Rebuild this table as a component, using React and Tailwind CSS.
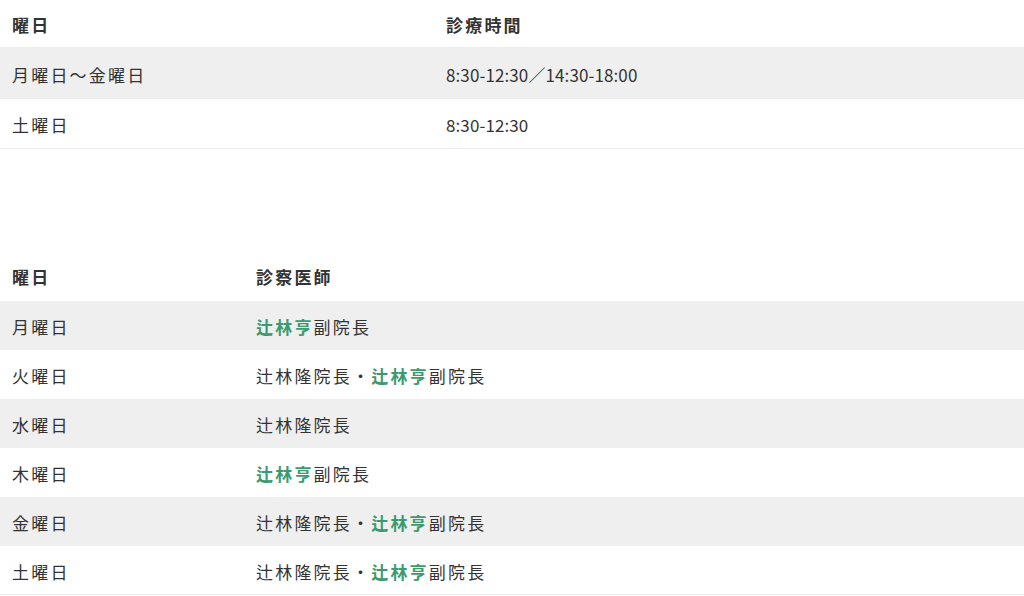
const hours = [
  { day: "月曜日〜金曜日", time: "8:30-12:30／14:30-18:00" },
  { day: "土曜日", time: "8:30-12:30" },
];

const G = ({ children }) => (
  <span className="font-bold text-[#3c9a6f]">{children}</span>
);

const doctors = [
  { day: "月曜日", doc: <><G>辻林亨</G>副院長</> },
  { day: "火曜日", doc: <>辻林隆院長・<G>辻林亨</G>副院長</> },
  { day: "水曜日", doc: <>辻林隆院長</> },
  { day: "木曜日", doc: <><G>辻林亨</G>副院長</> },
  { day: "金曜日", doc: <>辻林隆院長・<G>辻林亨</G>副院長</> },
  { day: "土曜日", doc: <>辻林隆院長・<G>辻林亨</G>副院長</> },
];

export default function App() {
  return (
    <div
      className="w-[1024px] h-[596px] overflow-hidden bg-white text-[#333] text-[17px] tracking-[2.2px]"
      style={{ fontFamily: '"Noto Sans CJK JP", "Noto Sans", sans-serif' }}
    >
      {/* 診療時間 */}
      <table className="w-full border-collapse">
        <thead>
          <tr className="h-[47px]">
            <th className="w-[434px] pl-3 pt-[3px] text-left font-bold">曜日</th>
            <th className="pl-3 pt-[3px] text-left font-bold">診療時間</th>
          </tr>
        </thead>
        <tbody>
          {hours.map((r, i) => (
            <tr
              key={i}
              className={
                (i % 2 === 0 ? "bg-[#efefef] h-[51px]" : "bg-white h-[50px]") +
                " border-b border-[#eeeeee]"
              }
            >
              <td className="pl-3 pt-1">{r.day}</td>
              <td className="pl-3 pt-1 tracking-[0.1px]">{r.time}</td>
            </tr>
          ))}
        </tbody>
      </table>

      {/* 診察医師 */}
      <table className="mt-[101px] w-full border-collapse">
        <thead>
          <tr className="h-[51px]">
            <th className="w-[244px] pl-3 pt-1 text-left font-bold">曜日</th>
            <th className="pl-3 pt-1 text-left font-bold">診察医師</th>
          </tr>
        </thead>
        <tbody>
          {doctors.map((r, i) => (
            <tr
              key={i}
              className={
                (i % 2 === 0 ? "bg-[#efefef]" : "bg-white") +
                " h-[49px] last:border-b last:border-[#eeeeee]"
              }
            >
              <td className="pl-3 pt-1">{r.day}</td>
              <td className="pl-3 pt-1">{r.doc}</td>
            </tr>
          ))}
        </tbody>
      </table>
    </div>
  );
}
